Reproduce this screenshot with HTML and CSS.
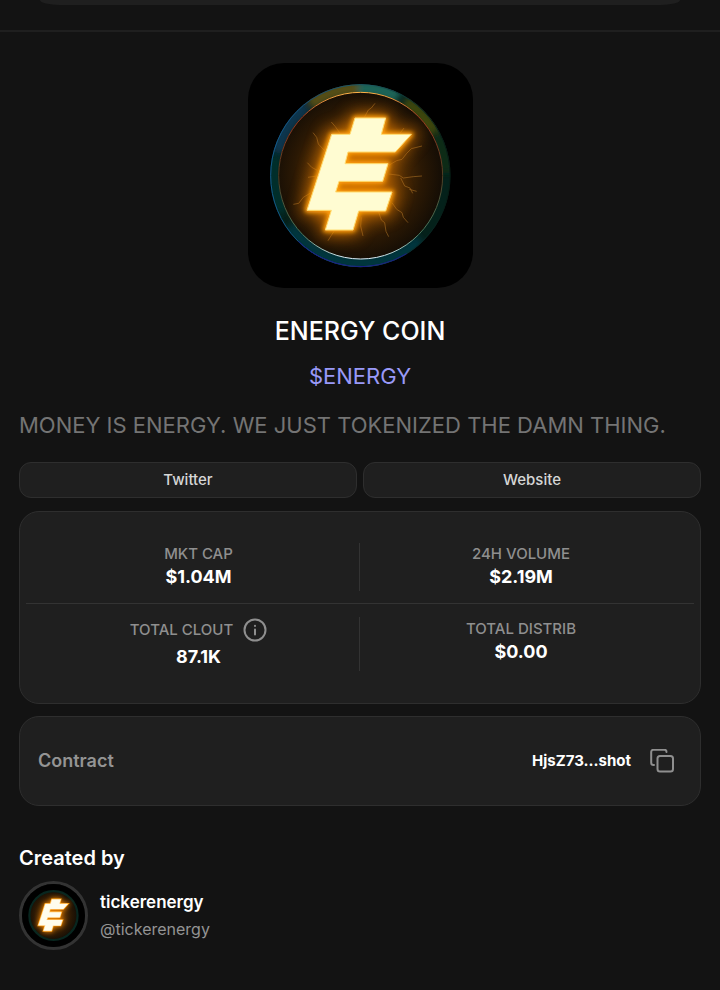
FILE: index.html
```html
<!DOCTYPE html>
<html lang="en">
<head>
<meta charset="utf-8">
<meta name="viewport" content="width=device-width, initial-scale=1">
<title>ENERGY COIN</title>
<link rel="stylesheet" href="styles.css">
</head>
<body>
<header class="top">
  <div class="top-card"></div>
</header>
<main class="page">
  <section class="hero">
    <svg class="coin" viewBox="24 21 675 675" role="img" aria-label="Energy coin">
      <defs>
        <radialGradient id="core" cx="48%" cy="50%" r="52%">
          <stop offset="0" stop-color="#8a4a04"/>
          <stop offset="0.45" stop-color="#573003"/>
          <stop offset="0.75" stop-color="#2a1804"/>
          <stop offset="1" stop-color="#140d05"/>
        </radialGradient>
        <linearGradient id="rim" x1="0" y1="0" x2="0" y2="1">
          <stop offset="0" stop-color="#ffb347"/>
          <stop offset="0.15" stop-color="#a03a20"/>
          <stop offset="0.5" stop-color="#4f3c22"/>
          <stop offset="0.85" stop-color="#4a7a60"/>
          <stop offset="1" stop-color="#e0f4ff"/>
        </linearGradient>
        <linearGradient id="edge" x1="0" y1="0" x2="1" y2="0">
          <stop offset="0" stop-color="#125a8c"/>
          <stop offset="0.25" stop-color="#174a70"/>
          <stop offset="0.55" stop-color="#1c5a62"/>
          <stop offset="0.8" stop-color="#0a2c2c"/>
          <stop offset="1" stop-color="#061a12"/>
        </linearGradient>
        <filter id="soft" x="-20%" y="-20%" width="140%" height="140%"><feGaussianBlur stdDeviation="9"/></filter>
        <filter id="wide" x="-40%" y="-40%" width="180%" height="180%"><feGaussianBlur stdDeviation="26"/></filter>
        <filter id="near" x="-20%" y="-20%" width="140%" height="140%"><feGaussianBlur stdDeviation="7"/></filter>
        <mask id="band">
          <ellipse cx="361" cy="359" rx="258" ry="262" fill="none" stroke="#fff" stroke-width="25"/>
        </mask>
        <path id="mark" d="M345 186H437L424 235H514L466 288H324L315 323H444L428 376H297L287 408H456L437 465H356L339 522H256L274 463H201L275 235H330Z"/>
      </defs>
      <rect x="24" y="21" width="675" height="675" fill="#000"/>
      <g mask="url(#band)">
        <rect x="80" y="70" width="570" height="580" fill="#04211a"/>
        <g fill="none" stroke-width="44" filter="url(#soft)">
          <path d="M110 290Q135 190 200 150" stroke="#08344e"/>
          <path d="M210 145Q270 95 365 97" stroke="#544d12"/>
          <path d="M355 97Q430 95 475 125" stroke="#1b6558"/>
          <path d="M495 135Q555 175 585 230" stroke="#3a4409"/>
          <path d="M590 235Q618 290 618 350" stroke="#0a2c14"/>
          <path d="M103 300Q97 400 130 470" stroke="#052d2c"/>
          <path d="M150 510Q240 625 360 622Q470 622 540 550" stroke="#05343e"/>
        </g>
      </g>
      <ellipse cx="361" cy="359" rx="269" ry="273" fill="none" stroke="url(#edge)" stroke-width="3"/>
      <path d="M175 556A269 273 0 0 0 500 593" fill="none" stroke="#1b1d86" stroke-width="3"/>
      <ellipse cx="362" cy="359" rx="246" ry="250" fill="url(#core)" stroke="url(#rim)" stroke-width="3"/>
      <g fill="none" stroke="#b87a28" stroke-width="2" stroke-linejoin="round" opacity="0.8">
        <path d="M373 184L385 162L394 156L405 142M300 232L286 212L274 198M254 284L235 264L230 244L219 230M232 343L215 334L202 320M210 412L190 424L176 442L160 445"/>
        <path d="M446 328L470 314L486 310L500 292L514 278L546 270M446 354L478 358L490 366L520 362L546 360M482 366L494 390L510 396L518 412M508 400L530 406M456 440L470 460L486 470L490 484L504 500"/>
        <path d="M416 468L424 492L434 500L438 526L446 542M282 526L274 538L264 554M364 484L362 510L369 540M480 232L492 216M230 360L204 364"/>
      </g>
      <use href="#mark" fill="#f08a00" stroke="#d97400" stroke-width="30" filter="url(#wide)" opacity="0.85"/>
      <use href="#mark" fill="#ff9d0a" stroke="#ff9d0a" stroke-width="14" stroke-linejoin="round" filter="url(#near)"/>
      <use href="#mark" fill="#fffcd2" stroke="#ffdc70" stroke-width="3" stroke-linejoin="round"/>
    </svg>
    <h1 class="name">ENERGY COIN</h1>
    <p class="ticker">$ENERGY</p>
  </section>
  <p class="about">MONEY IS ENERGY. WE JUST TOKENIZED THE DAMN THING.</p>
  <nav class="links">
    <a class="link" href="#twitter">Twitter</a>
    <a class="link" href="#website">Website</a>
  </nav>
  <section class="card stats">
    <div class="row">
      <dl class="stat"><dt>MKT CAP</dt><dd>$1.04M</dd></dl>
      <dl class="stat"><dt>24H VOLUME</dt><dd>$2.19M</dd></dl>
    </div>
    <div class="row">
      <dl class="stat">
        <dt class="with-icon">TOTAL CLOUT
          <button class="icon" type="button" aria-label="About total clout">
            <svg viewBox="0 0 24 24" fill="none" stroke="currentColor" stroke-width="2" stroke-linecap="round"><circle cx="12" cy="12" r="10.5"/><path d="M12 11.5V16.5M12 7.8V8"/></svg>
          </button>
        </dt>
        <dd>87.1K</dd>
      </dl>
      <dl class="stat"><dt>TOTAL DISTRIB</dt><dd>$0.00</dd></dl>
    </div>
  </section>
  <section class="card contract">
    <span class="contract-label">Contract</span>
    <span class="address">HjsZ73...shot</span>
    <button class="icon" type="button" aria-label="Copy contract address">
      <svg viewBox="0 0 24 24" fill="none" stroke="currentColor" stroke-width="2" stroke-linecap="round" stroke-linejoin="round"><rect x="7.5" y="7" width="15.5" height="15.500" rx="2.5"/><path d="M4 16H3.500A2.300 2.300 0 0 1 1.200 13.700V3A2.300 2.300 0 0 1 3.500 .7H14.200A2.300 2.300 0 0 1 16.500 3"/></svg>
    </button>
  </section>
  <h2 class="heading">Created by</h2>
  <section class="creator">
    <svg class="avatar" viewBox="24 21 675 675" role="img" aria-label="tickerenergy">
      <rect x="24" y="21" width="675" height="675" fill="#000"/>
      <ellipse cx="361" cy="359" rx="258" ry="262" fill="url(#core)" stroke="#08261f" stroke-width="24"/>
      <use href="#mark" fill="#f08a00" stroke="#d97400" stroke-width="30" filter="url(#wide)"/>
      <use href="#mark" fill="#ff9d0a" stroke="#ff9d0a" stroke-width="20" filter="url(#near)"/>
      <use href="#mark" fill="#fffdee" stroke="#fffdee" stroke-width="6"/>
    </svg>
    <div>
      <p class="creator-name">tickerenergy</p>
      <p class="handle">@tickerenergy</p>
    </div>
  </section>
</main>
</body>
</html>
```
FILE: styles.css
```css
* {
  box-sizing: border-box;
}

body {
  margin: 0;
  background: #131313;
  color: #fff;
  font-family: Inter, "Liberation Sans", sans-serif;
}

h1, h2, p, dl, dd {
  margin: 0;
}

.top {
  padding: 0 40px 25px;
  border-bottom: 2px solid #1f1f1f;
}

.top-card {
  height: 5px;
  background: #1f1f1f;
  border-radius: 0 0 20px 20px / 0 0 5px 5px;
}

.page {
  padding: 31px 19px 40px;
}

.hero {
  display: flex;
  flex-direction: column;
  align-items: center;
}

.coin {
  width: 225px;
  height: 225px;
  border-radius: 36px;
}

.name {
  margin-top: 26px;
  font-size: 25px;
  line-height: 34px;
  font-weight: 500;
}

.ticker {
  margin-top: 14px;
  font-size: 22px;
  line-height: 28px;
  color: #9999f8;
}

.about {
  margin-top: 21px;
  font-size: 22px;
  line-height: 28px;
  color: #747474;
}

.links {
  display: grid;
  grid-template-columns: 1fr 1fr;
  gap: 6px;
  margin-top: 23px;
}

.link {
  height: 36px;
  border: 1px solid #2e2e2e;
  border-radius: 12px;
  background: #1f1f1f;
  color: #d6d6d6;
  font-size: 15px;
  line-height: 34px;
  font-weight: 500;
  text-align: center;
  text-decoration: none;
}

.card {
  border: 1px solid #2e2e2e;
  border-radius: 20px;
  background: #1f1f1f;
}

.stats {
  margin-top: 13px;
  padding: 31px 6px 32px;
}

.row {
  display: grid;
  grid-template-columns: 1fr 1fr;
  padding: 0 12px 12px;
  border-bottom: 1px solid #333;
}

.row + .row {
  padding: 13px 12px 0;
  border-bottom: 0;
}

.stat {
  padding-bottom: 2px;
  text-align: center;
}

.row + .row .stat {
  padding-top: 1px;
}

.stat:first-child {
  border-right: 1px solid #333;
}

.stat dt {
  display: flex;
  justify-content: center;
  align-items: center;
  gap: 10px;
  color: #8f8f8f;
  font-size: 15px;
  line-height: 22px;
  font-weight: 500;
}

.stat .with-icon {
  padding-bottom: 3px;
}

.stat dd {
  font-size: 18px;
  line-height: 24px;
  font-weight: 700;
}

.icon {
  display: block;
  width: 24px;
  height: 24px;
  padding: 0;
  border: 0;
  background: none;
  color: #8f8f8f;
}

.icon svg {
  display: block;
}

.contract {
  display: flex;
  align-items: center;
  margin-top: 12px;
  padding: 32px 26px 32px 18px;
}

.contract-label {
  flex: 1;
  color: #949494;
  font-size: 18px;
  line-height: 24px;
  font-weight: 600;
}

.address {
  margin-right: 19px;
  font-size: 15px;
  line-height: 24px;
  font-weight: 700;
}

.heading {
  margin-top: 38px;
  font-size: 20px;
  line-height: 28px;
  font-weight: 600;
}

.creator {
  display: flex;
  align-items: center;
  gap: 12px;
  margin-top: 9px;
}

.avatar {
  width: 69px;
  height: 69px;
  border: 3px solid #333;
  border-radius: 50%;
}

.creator-name {
  font-size: 17px;
  line-height: 27px;
  font-weight: 600;
}

.handle {
  color: #949494;
  font-size: 16px;
  line-height: 27px;
}
```
